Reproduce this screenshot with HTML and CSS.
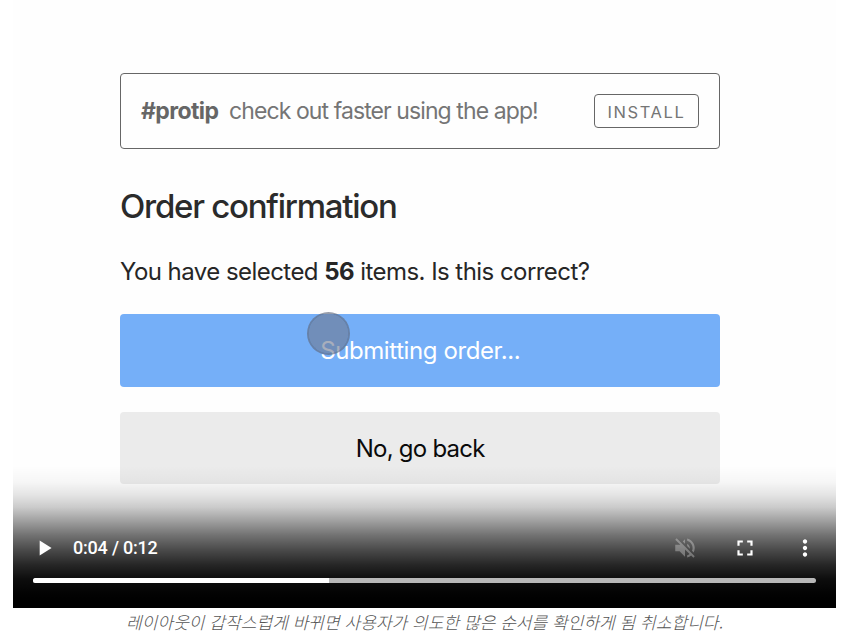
FILE: index.html
```html
<!DOCTYPE html>
<html lang="ko">
<head>
<meta charset="utf-8">
<title>Order confirmation</title>
<link rel="stylesheet" href="styles.css">
</head>
<body>
<figure class="figure">
  <div class="video">
    <div class="page">
      <div class="banner">
        <p class="tip"><strong class="tag">#protip</strong><span class="tip-text">check out faster using the app!</span></p>
        <button class="install">INSTALL</button>
      </div>
      <h1 class="title">Order confirmation</h1>
      <p class="question"><span>You have selected <b>56</b> items. Is this correct?</span></p>
      <button class="action primary"><span>Submitting order...</span></button>
      <button class="action secondary"><span>No, go back</span></button>
    </div>
    <div class="pointer"></div>
    <div class="controls">
      <div class="bar">
        <svg class="icon play" viewBox="0 0 24 24"><path d="M8 5v14l11-7z"/></svg>
        <span class="time">0:04 / 0:12</span>
        <svg class="icon muted" viewBox="0 0 24 24"><path d="M16.5 12c0-1.77-1.02-3.29-2.5-4.03v2.21l2.45 2.45c.03-.2.05-.41.05-.63zm2.5 0c0 .94-.2 1.82-.54 2.64l1.51 1.51C20.63 14.91 21 13.5 21 12c0-4.28-2.99-7.86-7-8.77v2.06c2.89.86 5 3.54 5 6.71zM4.27 3L3 4.27 7.73 9H3v6h4l5 5v-6.73l4.25 4.25c-.67.52-1.42.93-2.25 1.18v2.06c1.38-.31 2.63-.95 3.69-1.81L19.73 21 21 19.73l-9-9L4.27 3zM12 4L9.91 6.09 12 8.18V4z"/></svg>
        <svg class="icon" viewBox="0 0 24 24"><path d="M7 14H5v5h5v-2H7v-3zm-2-4h2V7h3V5H5v5zm12 7h-3v2h5v-5h-2v3zM14 5v2h3v3h2V5h-5z"/></svg>
        <svg class="icon more" viewBox="0 0 24 24"><path d="M12 8c1.1 0 2-.9 2-2s-.9-2-2-2-2 .9-2 2 .9 2 2 2zm0 2c-1.1 0-2 .9-2 2s.9 2 2 2 2-.9 2-2-.9-2-2-2zm0 6c-1.1 0-2 .9-2 2s.9 2 2 2 2-.9 2-2-.9-2-2-2z"/></svg>
      </div>
      <div class="track"><div class="played"></div></div>
    </div>
  </div>
  <figcaption class="caption"><span>레이아웃이 갑작스럽게 바뀌면 사용자가 의도한 많은 순서를 확인하게 됨 취소합니다.</span></figcaption>
</figure>
</body>
</html>
```

FILE: styles.css
```css
* { box-sizing: border-box; }
body { margin: 0; background: #fff; overflow: hidden; }
.figure { margin: 0 9px 0 13px; }
.video {
  position: relative;
  height: 608px;
  background: #fefefe;
  font-family: Inter, sans-serif;
}
.page { width: 600.4px; margin-left: 107px; padding-top: 73px; }
.banner {
  display: flex;
  align-items: center;
  justify-content: space-between;
  height: 76px;
  padding: 0 20px;
  border: 1px solid #666;
  border-radius: 4px;
  color: #757575;
}
.tip { display: flex; margin: 0; font-size: 23px; line-height: 30px; white-space: nowrap; }
.tag { width: 88px; color: #666; font-weight: 700; letter-spacing: -0.6px; }
.tip-text { letter-spacing: -0.91px; }
.install {
  width: 105px;
  height: 34px;
  padding: 2px 1px 0 0;
  border: 1px solid #666;
  border-radius: 4px;
  background: none;
  color: #757575;
  font: 16.5px/30px Inter, sans-serif;
  letter-spacing: 1.6px;
}
.title {
  margin: 37px 0 0;
  color: #2b2b2b;
  font-size: 33px;
  font-weight: 550;
  line-height: 40px;
  letter-spacing: -1.25px;
  white-space: nowrap;
}
.question {
  margin: 31px 0 0;
  color: #262626;
  font-size: 24px;
  line-height: 30px;
  letter-spacing: -0.55px;
  white-space: nowrap;
}
.action {
  display: block;
  width: 100%;
  height: 72.5px;
  padding: 2px 0 0;
  border: 0;
  border-radius: 4px;
  font: 24px/30px Inter, sans-serif;
}
.primary { margin-top: 27px; background: #75aff8; color: #fff; letter-spacing: -0.4px; }
.secondary { margin-top: 25px; background: #ebebeb; color: #0a0a0a; letter-spacing: -0.75px; }
.pointer {
  position: absolute;
  left: 294px;
  top: 312px;
  width: 43px;
  height: 43px;
  border: 2px solid rgba(96, 104, 125, .65);
  border-radius: 50%;
  background: rgba(110, 120, 143, .6);
  background-clip: padding-box;
}
.controls {
  position: absolute;
  left: 0;
  right: 0;
  bottom: 0;
  height: 142px;
  padding: 66px 20px 0;
  background: linear-gradient(rgba(0,0,0,0) 0, rgba(0,0,0,.03) 16px, rgba(0,0,0,.1) 29px, rgba(0,0,0,.2) 41px, rgba(0,0,0,.36) 54px, rgba(0,0,0,.55) 69px, rgba(0,0,0,.71) 84px, rgba(0,0,0,.85) 99px, rgba(0,0,0,.95) 113px, rgba(0,0,0,.99) 127px, #000 135px);
}
.bar { display: flex; align-items: center; height: 31px; margin: 0 -2px 0 -2.5px; }
.icon { width: 26px; height: 26px; flex: none; fill: #fff; margin-left: 34px; }
.play { margin-left: 0; }
.muted { opacity: .3; margin-left: auto; }
.time { margin-left: 16.5px; color: #fff; font: 500 18px/31px Roboto, sans-serif; letter-spacing: -0.2px; }
.track { height: 5px; margin-top: 15px; border-radius: 3px; background: #b8b8b8; overflow: hidden; }
.played { width: 296px; height: 5px; background: #fff; }
.caption {
  height: 29px;
  color: #555;
  font: italic 300 17px/27px "Noto Sans CJK KR", sans-serif;
  letter-spacing: 0.05px;
  text-align: center;
  white-space: nowrap;
}
```
